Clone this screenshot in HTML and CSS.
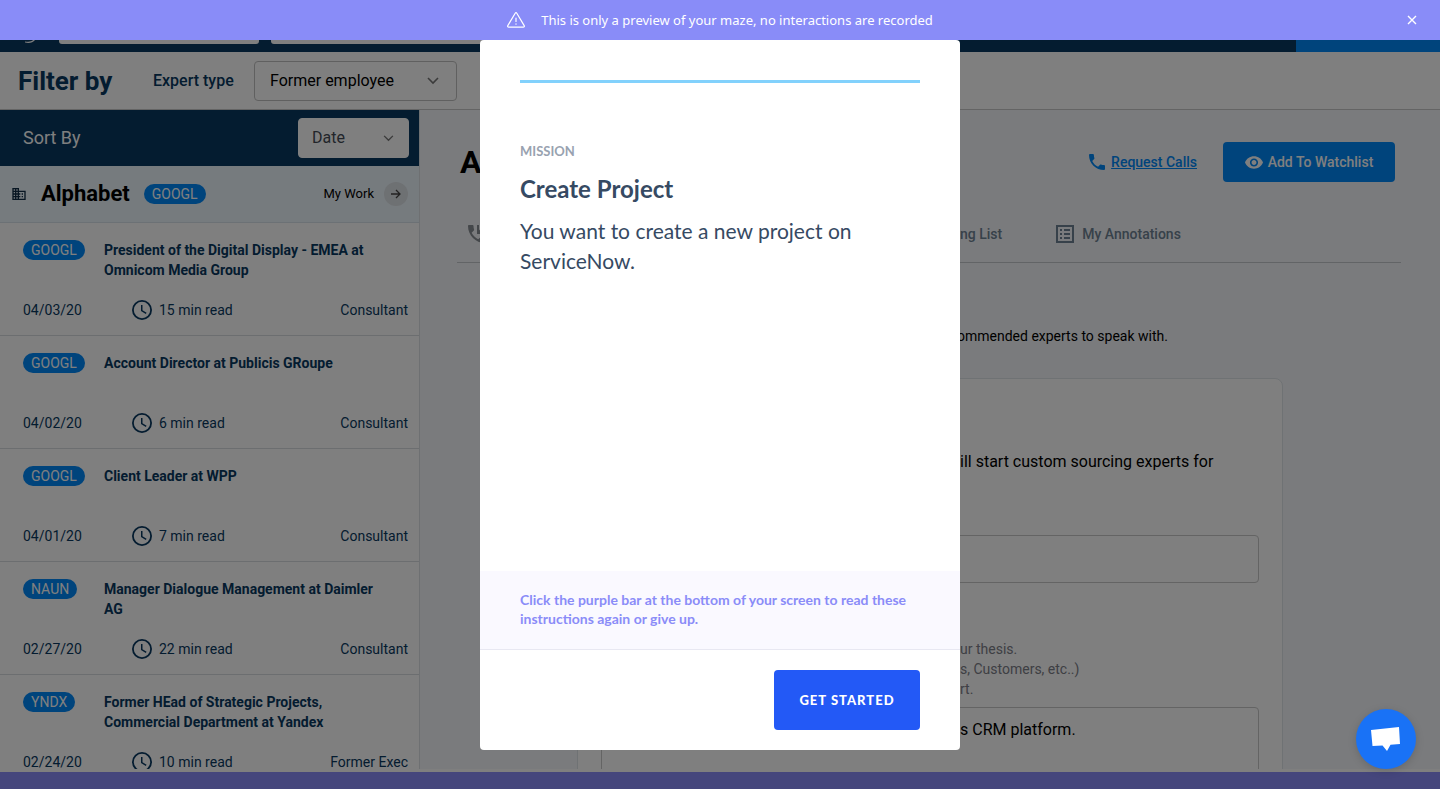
FILE: index.html
```html
<!DOCTYPE html>
<html lang="en">
<head>
<meta charset="utf-8">
<title>Create Project</title>
<link rel="stylesheet" href="styles.css">
</head>
<body>
<header class="banner">
  <p class="banner-message">
    <svg width="18" height="16" viewBox="0 0 18 16" fill="none" stroke="currentColor" stroke-width="1.2" stroke-linejoin="round" stroke-linecap="round"><path d="M8.200 1.200.8 13.600c-.4.800 0 1.600.9 1.600h14.600c.9 0 1.300-.8.9-1.600L9.800 1.200c-.4-.7-1.200-.7-1.600 0z"/><path d="M9 6v3.500M9 11.800v.4"/></svg>
    <span>This is only a preview of your maze, no interactions are recorded</span>
  </p>
  <button class="banner-close" type="button" aria-label="Close">
    <svg width="10" height="10" viewBox="0 0 10 10" stroke="currentColor" stroke-width="1.4"><path d="M1 1l8 8M9 1L1 9"/></svg>
  </button>
</header>

<div class="stage">
  <div class="app">
    <div class="topnav">
      <svg class="logo" width="12" height="4" viewBox="0 0 12 4" fill="none" stroke="#fff" stroke-width="1.2"><path d="M0 2c4 .8 8 0 10-3"/></svg>
      <span class="nav-field"></span>
      <span class="nav-field nav-field-wide"></span>
      <span class="nav-action"></span>
    </div>
    <div class="filters">
      <h2 class="filters-title">Filter by</h2>
      <label class="filters-label" for="expert">Expert type</label>
      <div class="picker">
        <select id="expert"><option>Former employee</option></select>
        <svg width="12" height="8" viewBox="0 0 12 8" fill="none" stroke="currentColor" stroke-width="1.600"><path d="M1 1l5 5 5-5"/></svg>
      </div>
    </div>
    <div class="columns">
      <aside class="sidebar">
        <div class="sort">
          <label for="sort">Sort By</label>
          <div class="picker picker-small">
            <select id="sort"><option>Date</option></select>
            <svg width="11" height="7" viewBox="0 0 12 8" fill="none" stroke="currentColor" stroke-width="1.600"><path d="M1 1l5 5 5-5"/></svg>
          </div>
        </div>
        <div class="company">
          <svg width="14" height="12" viewBox="2 3 20 18" fill="#102c44"><path d="M12 7V3H2v18h20V7H12zM6 19H4v-2h2v2zm0-4H4v-2h2v2zm0-4H4V9h2v2zm0-4H4V5h2v2zm4 12H8v-2h2v2zm0-4H8v-2h2v2zm0-4H8V9h2v2zm0-4H8V5h2v2zm10 12h-8v-2h2v-2h-2v-2h2v-2h-2V9h8v10zm-2-8h-2v2h2v-2zm0 4h-2v2h2v-2z"/></svg>
          <h3>Alphabet</h3>
          <span class="pill">GOOGL</span>
          <a class="mywork" href="#">My Work
            <span class="mywork-arrow"><svg width="10" height="10" viewBox="0 0 10 10" fill="none" stroke="#444" stroke-width="1.3"><path d="M0 5h9M5 1l4 4-4 4"/></svg></span>
          </a>
        </div>
        <article class="item">
          <div class="item-head"><span class="pill">GOOGL</span><h4>President of the Digital Display - EMEA at Omnicom Media Group</h4></div>
          <div class="item-meta"><span>04/03/20</span><svg class="clock" viewBox="0 0 20 20"><use href="#clock"/></svg><span>15 min read</span><span class="role">Consultant</span></div>
        </article>
        <article class="item">
          <div class="item-head"><span class="pill">GOOGL</span><h4>Account Director at Publicis GRoupe</h4></div>
          <div class="item-meta"><span>04/02/20</span><svg class="clock" viewBox="0 0 20 20"><use href="#clock"/></svg><span>6 min read</span><span class="role">Consultant</span></div>
        </article>
        <article class="item">
          <div class="item-head"><span class="pill">GOOGL</span><h4>Client Leader at WPP</h4></div>
          <div class="item-meta"><span>04/01/20</span><svg class="clock" viewBox="0 0 20 20"><use href="#clock"/></svg><span>7 min read</span><span class="role">Consultant</span></div>
        </article>
        <article class="item">
          <div class="item-head"><span class="pill">NAUN</span><h4>Manager Dialogue Management at Daimler AG</h4></div>
          <div class="item-meta"><span>02/27/20</span><svg class="clock" viewBox="0 0 20 20"><use href="#clock"/></svg><span>22 min read</span><span class="role">Consultant</span></div>
        </article>
        <article class="item">
          <div class="item-head"><span class="pill">YNDX</span><h4>Former HEad of Strategic Projects, Commercial Department at Yandex</h4></div>
          <div class="item-meta"><span>02/24/20</span><svg class="clock" viewBox="0 0 20 20"><use href="#clock"/></svg><span>10 min read</span><span class="role">Former Exec</span></div>
        </article>
      </aside>
      <main class="main">
        <div class="main-head">
          <h1>A</h1>
          <a class="calls" href="#">
            <svg width="16" height="16" viewBox="3 3 18 18" fill="currentColor"><path d="M6.620 10.790c1.440 2.830 3.760 5.140 6.590 6.590l2.200-2.200c.27-.27.67-.36 1.020-.24 1.120.37 2.330.57 3.570.57.55 0 1 .45 1 1V20c0 .55-.45 1-1 1-9.390 0-17-7.610-17-17 0-.55.45-1 1-1h3.500c.55 0 1 .45 1 1 0 1.250.2 2.450.57 3.570.11.35.03.74-.25 1.020l-2.200 2.200z"/></svg>
            <span>Request Calls</span>
          </a>
          <button class="watch" type="button">
            <svg width="18" height="13" viewBox="1 4.500 22 15" fill="currentColor"><path d="M12 4.500C7 4.500 2.730 7.610 1 12c1.730 4.390 6 7.500 11 7.500s9.270-3.110 11-7.500c-1.730-4.390-6-7.500-11-7.500zM12 17c-2.760 0-5-2.240-5-5s2.240-5 5-5 5 2.240 5 5-2.240 5-5 5zm0-8c-1.660 0-3 1.340-3 3s1.340 3 3 3 3-1.340 3-3-1.340-3-3-3z"/></svg>
            Add To Watchlist
          </button>
        </div>
        <nav class="tabs">
          <svg width="18" height="18" viewBox="3 3 18 18" fill="#888e94"><path d="M20 15.500c-1.250 0-2.450-.2-3.570-.57-.35-.11-.74-.03-1.020.24l-2.200 2.200c-2.830-1.440-5.150-3.750-6.590-6.580l2.200-2.210c.28-.27.36-.66.25-1.010C8.700 6.450 8.500 5.250 8.500 4c0-.55-.45-1-1-1H4c-.55 0-1 .45-1 1 0 9.390 7.610 17 17 17 .55 0 1-.45 1-1v-3.500c0-.55-.45-1-1-1z"/><path d="M12 3v9h9v-2h-5.600L21 4.400 19.600 3 14 8.600V3z"/></svg>
          <a class="tab-list" href="#">ng List</a>
          <a class="tab" href="#">
            <svg width="18" height="18" viewBox="0 0 18 18" fill="none" stroke="currentColor" stroke-width="2"><path d="M1 1h16v16H1zM4 5h2M4 9h2M4 13h2M8 5h6M8 9h6M8 13h6"/></svg>
            My Annotations
          </a>
        </nav>
        <p class="intro">ommended experts to speak with.</p>
        <section class="card">
          <p class="card-lead">ill start custom sourcing experts for</p>
          <input class="box" type="text" aria-label="Project name">
          <p class="card-help">ur thesis.<br>s, Customers, etc..)<br>rt.</p>
          <textarea class="box box-tall" aria-label="Project details">s CRM platform.</textarea>
        </section>
      </main>
    </div>
  </div>
  <button class="mission-bar" type="button" aria-label="Show mission"></button>

  <div class="overlay">
    <section class="modal" role="dialog" aria-labelledby="mission-title">
      <div class="modal-body">
        <div class="progress"></div>
        <p class="eyebrow">MISSION</p>
        <h2 id="mission-title">Create Project</h2>
        <p class="mission">You want to create a new project on ServiceNow.</p>
      </div>
      <p class="hint">Click the purple bar at the bottom of your screen to read these instructions again or give up.</p>
      <footer class="modal-foot"><button class="start" type="button">GET STARTED</button></footer>
    </section>
  </div>
  <button class="chat" type="button" aria-label="Open chat">
    <svg width="30" height="26" viewBox="0 0 30 26" fill="#fff"><path d="M0 4l28-3 1 17-9.500.8L16 25l-4.500-5.500-10 .5z"/></svg>
  </button>
</div>
<svg width="0" height="0" class="defs"><symbol id="clock" viewBox="2 2 20 20"><path d="M12 2a10 10 0 1 0 0 20 10 10 0 0 0 0-20zm0 18.200a8.200 8.200 0 1 1 0-16.400 8.200 8.200 0 0 1 0 16.400zM12.500 7H11v6l4.800 3 .8-1.300-4.100-2.500z" fill="#083860"/></symbol></svg>
</body>
</html>
```

FILE: styles.css
```css
* { box-sizing: border-box; }
body, h1, h2, h3, h4, p { margin: 0; }
button, select, input, textarea { font: inherit; color: inherit; border: 0; margin: 0; }
a { color: inherit; text-decoration: none; }
svg { flex: none; display: block; }

body {
  height: 100vh;
  display: flex;
  flex-direction: column;
  overflow: hidden;
  font: 14px/20px Roboto, sans-serif;
  color: #083860;
}
.defs { position: absolute; }

.banner {
  height: 40px;
  flex: none;
  display: grid;
  grid-template-columns: 40px 1fr 40px;
  align-items: center;
  padding: 0 8px;
  background: #898cf8;
  color: #fff;
  font: 13px/20px "Noto Sans", sans-serif;
}
.banner-message { grid-column: 2; display: flex; align-items: center; justify-content: center; gap: 16px; }
.banner-close { background: none; padding: 12px; justify-self: center; }

.stage { flex: 1; min-height: 0; position: relative; display: flex; flex-direction: column; gap: 3px; background: #fff; }
.app { flex: 1; min-height: 0; overflow: hidden; display: flex; flex-direction: column; }
.mission-bar { height: 17px; flex: none; background: #8a8cf8; }

.topnav { height: 12px; flex: none; display: flex; align-items: flex-start; gap: 12px; padding-left: 25px; background: #083860; }
.logo { margin-right: 10px; }
.nav-field { width: 200px; height: 4px; background: #fff; border-radius: 0 0 3px 3px; }
.nav-field-wide { width: 400px; }
.nav-action { width: 144px; height: 12px; margin-left: auto; background: #0088f8; }

.filters {
  height: 58px;
  flex: none;
  display: grid;
  grid-template-columns: 135px 101px 203px;
  align-items: center;
  padding-left: 18px;
  border-bottom: 1px solid #c8c8c8;
}
.filters-title { font-size: 26px; line-height: 32px; font-weight: 700; }
.filters-label { font-size: 16px; font-weight: 500; }

.picker { display: grid; align-items: center; color: #000; }
.picker > * { grid-area: 1 / 1; }
.picker select { appearance: none; width: 100%; height: 40px; padding: 0 15px; border: 1px solid #c0c0c0; border-radius: 4px; background: #fff; font-size: 16px; }
.picker svg { justify-self: end; margin-right: 18px; color: #777; pointer-events: none; }
.picker-small { width: 111px; color: #444b55; }
.picker-small select { padding: 0 13px; border-color: #fff; }
.picker-small svg { margin-right: 15px; }

.columns { flex: 1; min-height: 0; display: grid; grid-template-columns: 420px 1fr; }
.sidebar { min-height: 0; overflow: hidden; border-right: 1px solid #dde1e5; background: #fff; }
.sort { height: 56px; display: flex; align-items: center; justify-content: space-between; padding: 0 10px 0 23px; background: #083860; color: #fff; font-size: 18px; }
.company { height: 57px; display: flex; align-items: center; padding: 0 11px 0 12px; background: #edf6fd; border-bottom: 1px solid #d9e2ea; color: #000; }
.company h3 { margin: 0 14px 0 15px; font-size: 22px; line-height: 28px; }
.mywork { margin-left: auto; display: flex; align-items: center; gap: 10px; font-size: 13px; }
.mywork-arrow { width: 24px; height: 24px; display: grid; place-items: center; border-radius: 50%; background: #dde2e6; }
.pill { padding: 0 8px; border-radius: 10px; background: #0088f8; color: #fff; }

.item { padding: 17px 11px 15px 23px; border-bottom: 1px solid #d9dde0; }
.item-head { display: grid; grid-template-columns: 81px 1fr; align-items: start; min-height: 40px; margin-bottom: 20px; }
.item-head .pill { justify-self: start; }
.item-head h4 { max-width: 288px; font-size: 14px; font-weight: 700; }
.item-meta { display: grid; grid-template-columns: 109px 27px 1fr auto; align-items: center; }
.clock { width: 20px; height: 20px; }

.main { min-width: 0; min-height: 0; overflow: hidden; padding: 32px 39px 0 37px; background: #f5f7fa; }
.main-head { display: flex; align-items: center; padding-right: 6px; font-weight: 500; }
.main-head h1 { margin: 0 auto 0 3px; font-size: 32px; line-height: 40px; color: #000; }
.calls { display: flex; align-items: center; gap: 6px; margin-right: 26px; color: #0088f8; }
.calls span { text-decoration: underline; }
.watch { display: flex; align-items: center; justify-content: center; gap: 5px; width: 172px; height: 40px; border-radius: 4px; background: #0088f8; color: #fff; font-weight: 500; }
.tabs { height: 81px; display: flex; align-items: center; padding: 24px 0 0 11px; border-bottom: 1px solid #c4c8cc; color: #6e8294; font-weight: 500; }
.tab-list { margin-left: 474px; }
.tab { display: flex; align-items: center; gap: 8px; margin-left: 54px; }
.intro { margin: 63px 0 32px 500px; color: #000; }
.card { max-width: 706px; margin-left: 120px; padding: 71px 23px 0; border: 1px solid #dfe4e9; border-radius: 8px; background: #fff; color: #000; }
.card-lead { margin: 0 0 61px 359px; font-size: 16px; line-height: 24px; }
.box { display: block; width: 100%; height: 48px; padding: 12px; border: 1px solid #c8c8c8; border-radius: 4px; background: #fff; font-size: 16px; }
.card-help { margin: 56px 0 8px 359px; color: #7c8088; }
.box-tall { height: 90px; resize: none; padding-left: 358px; }

.overlay { position: absolute; inset: 0; display: flex; justify-content: center; padding-bottom: 39px; background: rgba(0, 0, 0, 0.5); }
.modal { width: 480px; display: flex; flex-direction: column; overflow: hidden; border-radius: 4px; background: #fff; color: #364a63; font-family: Lato, sans-serif; }
.modal-body { flex: 1; padding: 40px 40px 0; }
.progress { height: 3px; margin-bottom: 58px; background: #82d1fc; }
.eyebrow { margin-bottom: 12px; font-size: 13px; font-weight: 700; color: #98a2b0; }
.modal h2 { margin-bottom: 11px; font-size: 24px; line-height: 32px; font-weight: 700; }
.mission { font-size: 21px; line-height: 30px; }
.hint { padding: 19px 40px 21px; border-bottom: 1px solid #e8e8f2; background: #faf9ff; color: #8a8cf8; font-size: 14px; line-height: 19px; font-weight: 700; }
.modal-foot { display: flex; justify-content: flex-end; padding: 20px 40px; }
.start { height: 60px; width: 146px; border-radius: 4px; background: #2359f6; color: #fff; font-size: 13px; font-weight: 900; letter-spacing: 1px; }

.chat { position: absolute; right: 24px; bottom: 20px; width: 60px; height: 60px; display: grid; place-items: center; padding: 0; border-radius: 50%; background: #1972f6; box-shadow: 0 2px 8px rgba(0, 0, 0, 0.15); }
```
